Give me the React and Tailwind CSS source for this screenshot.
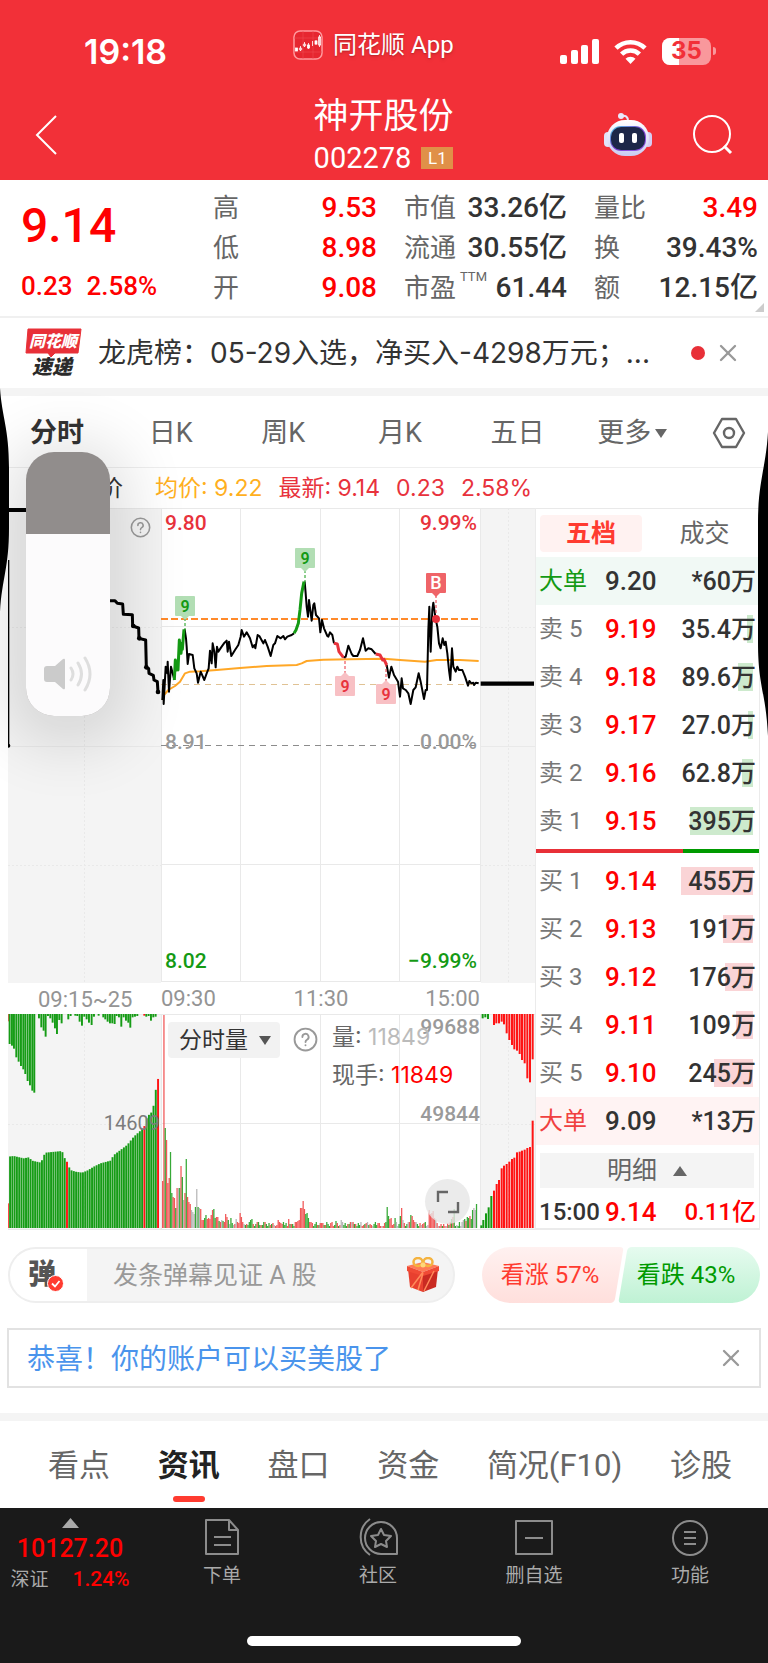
import React, { useState } from "react";
import { X } from "lucide-react";

const stats = [
  [
    { label: "高", value: "9.53", up: true },
    { label: "低", value: "8.98", up: true },
    { label: "开", value: "9.08", up: true },
  ],
  [
    { label: "市值", value: "33.26亿" },
    { label: "流通", value: "30.55亿" },
    { label: "市盈", sup: "TTM", value: "61.44" },
  ],
  [
    { label: "量比", value: "3.49", up: true },
    { label: "换", value: "39.43%" },
    { label: "额", value: "12.15亿" },
  ],
];

const asks = [
  { label: "卖 5", price: "9.19", volume: "35.4万", depth: 6 },
  { label: "卖 4", price: "9.18", volume: "89.6万", depth: 15 },
  { label: "卖 3", price: "9.17", volume: "27.0万", depth: 5 },
  { label: "卖 2", price: "9.16", volume: "62.8万", depth: 11 },
  { label: "卖 1", price: "9.15", volume: "395万", depth: 63 },
];

const bids = [
  { label: "买 1", price: "9.14", volume: "455万", depth: 72 },
  { label: "买 2", price: "9.13", volume: "191万", depth: 30 },
  { label: "买 3", price: "9.12", volume: "176万", depth: 28 },
  { label: "买 4", price: "9.11", volume: "109万", depth: 17 },
  { label: "买 5", price: "9.10", volume: "245万", depth: 39 },
];

// Price trace, in thirds of a pixel
const preOpen =
  "330,662 345,662 352,670 368,672 370,703 397,704 398,738 416,744 417,775 437,780 439,862 446,866 447,880 460,886 462,900 472,905 474,936";
const black1 = "487,960 490,900 491,972 497,860 502,880 503,845 507,935 513,860 518,880 523,900";
const green1 = "523,900 526,840 530,870 533,850 534,870 538,780 543,820 546,790 547,808 552,748";
const black2 =
  "554,748 558,775 560,800 563,852 567,822 578,825 583,865 590,880 594,908 602,875 613,900 620,880 626,865 630,812 635,850 638,790 643,815 647,862 651,800 655,815 665,800 672,790 680,782 683,815 687,785 694,828 705,810 715,795 722,770 725,750 732,770 740,757 750,775 758,802 763,795 766,805 773,765 778,768 790,790 795,780 803,800 812,828 820,795 825,790 832,768 842,775 850,768 855,778 862,770 875,765 882,760";
const green2 = "882,760 888,750 895,730 900,690 905,640 912,605";
const black3 =
  "914,605 917,640 920,680 924,710 927,660 935,722 940,675 943,670 948,705 957,715 961,757 966,720 972,745 982,768 985,770 990,757 997,765 1002,790";
const red1 = "1002,790 1012,792 1017,815 1030,832";
const black4 =
  "1030,832 1037,830 1045,797 1055,822 1060,828 1072,828 1080,810 1089,775 1097,812 1105,805 1115,808 1127,822";
const red2 = "1127,822 1140,825 1148,840 1152,838 1160,855";
const black5 =
  "1160,855 1167,893 1174,860 1182,885 1194,905 1200,950 1205,895 1209,925 1217,930 1225,940 1232,972 1240,930 1247,922 1256,880 1262,905 1272,957 1277,930 1281,930 1285,750 1288,680 1292,815 1297,690 1300,668 1307,718 1312,740 1317,790 1322,805 1328,775 1333,795 1337,785 1342,820 1347,870 1351,900 1356,805 1360,860 1367,875 1372,860 1377,870 1387,870 1395,890 1404,917 1408,903 1414,910 1420,908 1422,915 1428,908 1436,910";
const average =
  "487,960 492,945 505,930 525,918 540,905 555,880 570,875 600,874 650,870 720,864 800,858 890,855 905,850 920,843 970,839 1050,838 1152,836 1200,840 1275,845 1310,840 1380,840 1436,843";

const R = "#ee3b3b";
const G = "#149a14";
const S = "#aaaaaa";

const openingVolume = [
  [47, R], [213, R], [100, G], [88, R], [45, R], [50, R], [76, G], [35, G], [31, R], [30, R],
  [20, G], [40, R], [40, S], [40, G], [62, R], [51, G], [28, S], [35, R], [69, G], [31, R],
  [26, R], [24, R], [18, S], [16, S], [14, S], [21, G], [39, S], [21, G], [20, S], [19, R],
  [8, R], [8, R], [10, G], [13, G], [9, R], [10, R], [9, R], [13, R], [18, R], [19, G],
  [10, G], [11, R], [11, R], [7, G], [6, R], [8, S], [7, G], [6, R], [14, R], [11, R],
  [8, G], [4, S], [10, G], [5, G], [3, S], [4, R], [9, S], [6, R], [5, R], [15, R],
  [11, R], [6, R], [4, S], [3, G], [4, R], [3, G], [6, G], [8, G], [9, G], [4, R],
];
const volumeSpikes = {
  88: [8, R], 96: [9, R], 101: [6, R], 102: [6, R], 103: [7, R], 104: [8, R], 105: [20, R], 106: [20, R],
  107: [27, R], 108: [19, R], 109: [14, G], 110: [15, G], 111: [10, G], 112: [6, R], 132: [7, G],
  136: [8, S], 170: [6, G], 171: [21, G], 172: [12, G], 173: [9, R], 174: [10, R], 177: [10, G],
  181: [12, G], 182: [20, R], 183: [8, S], 189: [13, G], 190: [12, R], 191: [8, R], 203: [18, R],
  204: [14, R], 205: [15, R], 206: [17, R], 207: [10, R], 208: [9, S], 220: [9, G], 221: [11, R],
  222: [19, G], 229: [8, S], 230: [9, G], 231: [7, R], 232: [11, G], 233: [10, G], 234: [12, R],
  235: [9, G], 236: [18, G], 237: [20, S], 238: [18, S], 239: [24, G],
};
const tradeVolume = Array.from({ length: 240 }, (_, i) => {
  if (openingVolume[i]) return openingVolume[i];
  if (volumeSpikes[i]) return volumeSpikes[i];
  const n = (i * 37 + ((i * i) % 23) * 11) % 17;
  return [2 + (n % 5), n < 8 ? G : n < 14 ? R : S];
});

const preKeys = [
  [22, 470], [40, 468], [70, 475], [85, 472], [95, 482], [122, 488], [128, 470], [135, 458], [185, 453],
  [190, 472], [197, 478], [203, 495], [210, 510], [225, 515], [245, 518], [260, 512], [280, 500],
  [300, 490], [330, 482], [340, 465], [380, 435], [400, 410], [420, 392], [432, 378], [440, 350],
  [455, 335], [462, 305], [467, 260], [475, 228],
];
const levelAt = (x) => {
  const i = Math.max(1, preKeys.findIndex((k) => k[0] >= x));
  const [x0, y0] = preKeys[i - 1];
  const [x1, y1] = preKeys[i];
  return y0 + ((y1 - y0) * (x - x0)) / (x1 - x0);
};
const preBars = Array.from({ length: 67 }, (_, i) => {
  const x = 22 + i * 6.83;
  return { x, y: i === 0 ? 610 : levelAt(x), red: i === 0 || i === 26 || i === 60 || i === 66 };
});
const preTop = [
  [29, 132], [36, 137], [42, 146], [49, 172], [56, 185], [63, 198], [70, 208], [76, 222], [83, 243],
  [90, 256], [97, 272], [103, 278], [117, 55], [124, 82], [131, 92], [137, 110], [144, 48], [151, 55],
  [158, 68], [165, 85], [171, 102], [178, 60], [185, 70], [205, 58], [212, 48], [226, 47], [232, 48],
  [239, 65], [246, 77], [253, 50], [260, 58], [267, 68], [275, 75], [282, 50], [296, 47], [310, 52],
  [316, 58], [323, 65], [330, 70], [337, 70], [344, 72], [350, 48], [357, 52], [364, 80], [371, 52],
  [378, 62], [385, 68], [391, 83], [398, 52], [405, 50], [412, 48], [439, 50], [446, 48], [453, 62],
  [460, 52], [467, 50],
];
const closeTop = [
  [296, 55, G], [304, 52, G], [312, 57, G], [330, 75], [337, 70], [345, 70], [353, 65], [360, 73],
  [368, 100], [376, 120], [384, 135], [391, 148], [399, 152], [407, 162], [414, 180], [422, 190],
  [430, 235], [438, 247], [446, 178],
];
const closeBottom = [
  [292, 676, G], [298, 660, G], [306, 640, G], [314, 622, G], [322, 588, G], [330, 572], [338, 552],
  [345, 540], [353, 505], [360, 497], [368, 492], [376, 485], [384, 477], [391, 473], [399, 457],
  [407, 455], [414, 452], [422, 449], [430, 444], [438, 441], [446, 362],
];

const Marker = ({ x, y, text, color, bg, below, tip, solid }) => (
  <g>
    <line x1={x} x2={x} y1={below ? y - 2 : y + 22} y2={tip} stroke={color} strokeDasharray="3 2" />
    <path d={below ? `M${x - 4} ${y}l4 -4l4 4z` : `M${x - 4} ${y + 20}l4 4l4 -4z`} fill={bg} />
    <rect x={x - 10} y={y} width="20" height="20" rx="1" fill={bg} />
    <text
      x={x}
      y={y + 16}
      textAnchor="middle"
      fontSize={solid ? 18 : 16}
      fontWeight={solid ? 500 : 600}
      fill={solid ? "#fff" : color}
    >
      {text}
    </text>
  </g>
);

const MinuteChart = () => (
  <svg
    viewBox="8 508 527 722"
    className="block w-full h-auto font-[Roboto,'Noto_Sans_CJK_SC',sans-serif]"
    role="img"
    aria-label="分时走势"
  >
    {/* call auction and after-hours areas */}
    <g fill="#f4f4f4">
      <rect x="8" y="508" width="153" height="475" />
      <rect x="481" y="508" width="54" height="475" />
      <rect x="8" y="1014" width="153" height="216" />
      <rect x="481" y="1014" width="54" height="216" />
    </g>
    <g stroke="#e9e9e9" fill="none">
      <path d="M8 508.5H535M161.5 508V982M240.5 508V982M320.5 508V982M399.5 508V982M480.5 508V982M161 626.5H480M161 864.5H480M161 981.5H480" />
      <path d="M161.5 1014V1230M240.5 1014V1228M320.5 1014V1228M399.5 1014V1228M480.5 1014V1230M8 1014.5H535M161 1123.5H480M8 1229.5H535" />
      <path d="M8 627.5H161M8 865.5H161M84.5 508V982M481 627.5H535M481 865.5H535M508.5 508V982M84.5 1014V1228M8 1124.5H161M508.5 1014V1228M481 1124.5H535" strokeDasharray="2 2" />
      <path d="M8 746.5H161M481 746.5H535" />
    </g>
    <path d="M161 745.5H480" stroke="#8c8c8c" strokeDasharray="6 5" />
    <path d="M161 684.5H480" stroke="#e0c294" strokeDasharray="6 5" />
    <path d="M161 619H480" stroke="#ff8a2b" strokeWidth="2" strokeDasharray="7 3" />

    <g transform="translate(0 380) scale(0.33333)" fill="none" strokeWidth="6" strokeLinejoin="round">
      <polyline points={average} stroke="#ffa726" />
      <polyline points={preOpen} stroke="#000" strokeWidth="9" />
      <g stroke="#000">
        <polyline points={black1} />
        <polyline points={black2} />
        <polyline points={black3} />
        <polyline points={black4} />
        <polyline points={black5} />
        <path d="M24 390H90" strokeWidth="12" />
        <path d="M25 540V1097" />
        <path d="M1442 911H1602" strokeWidth="13" />
      </g>
      <g fill="#000">
        <circle cx="25" cy="1097" r="6" />
        <circle cx="474" cy="936" r="7" />
        <circle cx="439" cy="862" r="7" />
        <circle cx="400" cy="738" r="7" />
        <circle cx="418" cy="775" r="7" />
      </g>
      <g stroke={G} strokeWidth="9">
        <polyline points={green1} />
        <polyline points={green2} />
      </g>
      <g stroke="#e8323c" strokeWidth="9">
        <polyline points={red1} />
        <polyline points={red2} />
      </g>
    </g>
    <circle cx="436" cy="619" r="4" fill="#e8323c" />
    <Marker x={185} y={596} tip={630} text="9" color={G} bg="#b2deb4" />
    <Marker x={305} y={548} tip={582} text="9" color={G} bg="#b2deb4" />
    <Marker x={345} y={676} tip={658} text="9" color="#e8323c" bg="#f8c0c4" below />
    <Marker x={386} y={684} tip={664} text="9" color="#e8323c" bg="#f8c0c4" below />
    <Marker x={436} y={573} tip={616} text="B" color="#e8323c" bg="#ef6468" solid />

    <g fontSize="21" fontWeight="500">
      <text x="165" y="530" fill="#e8323c">9.80</text>
      <text x="477" y="530" textAnchor="end" fill="#e8323c">9.99%</text>
      <text x="165" y="749" fill="#999">8.91</text>
      <text x="477" y="749" textAnchor="end" fill="#999">0.00%</text>
      <text x="165" y="968" fill={G}>8.02</text>
      <text x="477" y="968" textAnchor="end" fill={G}>−9.99%</text>
    </g>
    <g fontSize="22" fill="#949494">
      <text x="38" y="1007">09:15~25</text>
      <text x="161" y="1006">09:30</text>
      <text x="321" y="1006" textAnchor="middle">11:30</text>
      <text x="480" y="1006" textAnchor="end">15:00</text>
    </g>

    {/* volume */}
    <g transform="translate(0 1000) scale(0.33333)">
      {preBars.map((b) => (
        <rect key={b.x} x={b.x - 1.5} y={b.y} width="5.8" height={684 - b.y} fill={b.red ? "#ff1414" : "#169c16"} />
      ))}
      <rect x="22" y="42" width="4" height="22" fill="#ff1414" />
      <rect x="430" y="42" width="6" height="5" fill="#ff1414" />
      {preTop.map(([x, y]) => (
        <rect key={x} x={x - 3} y="42" width="5.8" height={y - 42} fill="#169c16" />
      ))}
      {closeTop.map(([x, y, c]) => (
        <rect key={x} x={x + 1149} y="42" width="6" height={y - 42} fill={c || "#ff1414"} />
      ))}
      {closeBottom.map(([x, y, c]) => (
        <rect key={x} x={x + 1149} y={y} width="6" height={684 - y} fill={c || "#ff1414"} />
      ))}
      {tradeVolume.map(([h, color], i) => (
        <rect key={i} x={486 + i * 3.94} y={684 - h * 3} width="3.8" height={h * 3} fill={color} opacity="0.85" />
      ))}
    </g>
    <g fontSize="21" fontWeight="500" fill="#9a9a9a">
      <text x="480" y="1034" textAnchor="end">99688</text>
      <text x="480" y="1121" textAnchor="end">49844</text>
      <text x="160" y="1130" fontSize="20" fontWeight="400" textAnchor="end" fill="#7c7c7c">14609</text>
    </g>
  </svg>
);

const HelpIcon = ({ size }) => (
  <svg width={size} height={size} viewBox="0 0 24 24" fill="none" stroke="#999" strokeWidth="1.8" strokeLinecap="round">
    <circle cx="12" cy="12" r="10.5" />
    <path d="M9 9.6a3 3 0 1 1 4.4 2.6c-1 .6-1.4 1-1.4 2.2M12 17.4v.2" />
  </svg>
);

const BookRow = ({ row, color }) => (
  <tr className="h-12">
    <td className="pl-[3px] text-[24px] text-[#777]">{row.label}</td>
    <td className="text-[26px] font-medium text-[#ff0000]">{row.price}</td>
    <td className="relative pr-[3px] text-right text-[25px] font-medium text-[#333]">
      <div
        className={`absolute right-[6px] top-[10px] h-7 ${color}`}
        style={{ width: row.depth }}
      />
      <span className="relative">{row.volume}</span>
    </td>
  </tr>
);

const BigOrderRow = ({ price, volume, className, labelClass }) => (
  <tr className={`h-12 ${className}`}>
    <td className={`pl-[3px] text-[24px] ${labelClass}`}>大单</td>
    <td className="text-[26px] font-medium text-[#333]">{price}</td>
    <td className="pr-[3px] text-right text-[25px] font-medium text-[#333]">{volume}</td>
  </tr>
);

const OrderBook = () => (
  <div className="w-[225px] shrink-0 border-x border-b-2 border-[#ebebeb] leading-none">
    <div className="flex h-[49px] items-center border-t border-[#e9e9e9] pl-1 text-[25px]">
      <button className="h-[37px] w-[102px] rounded bg-[#fff2f1] font-bold text-[#ff3b30]">五档</button>
      <button className="flex-1 pl-2 text-[#666]">成交</button>
    </div>
    <table className="w-full table-fixed border-collapse whitespace-nowrap">
      <colgroup>
        <col className="w-[69px]" />
        <col className="w-[58px]" />
        <col />
      </colgroup>
      <tbody>
        <BigOrderRow price="9.20" volume="*60万" className="bg-[#f1f9f5]" labelClass="text-[#149a14]" />
        {asks.map((row) => (
          <BookRow key={row.label} row={row} color="bg-[#cdeacd]" />
        ))}
        <tr className="h-3">
          <td colSpan={3}>
            <div className="flex h-1">
              <div className="w-[66%] bg-[#e83038]" />
              <div className="flex-1 bg-[#009a00]" />
            </div>
          </td>
        </tr>
        {bids.map((row) => (
          <BookRow key={row.label} row={row} color="bg-[#fad4d6]" />
        ))}
        <BigOrderRow price="9.09" volume="*13万" className="bg-[#fff3f3]" labelClass="text-[#f04040]" />
      </tbody>
    </table>
    <button className="mx-1 mt-2 flex h-[35px] w-[214px] items-center justify-center gap-4 bg-[#f4f4f4] text-[25px] text-[#666]">
      明细
      <svg width="14" height="10" viewBox="0 0 14 10">
        <path d="M7 0l7 10H0z" fill="#666" />
      </svg>
    </button>
    <div className="flex h-10 items-center whitespace-nowrap pl-[3px] pr-[3px] pt-2 text-[24px] font-medium">
      <span className="w-[66px] text-[#333]">15:00</span>
      <span className="text-[26px] text-[#ff0000]">9.14</span>
      <span className="ml-auto text-[#ff0000]">0.11亿</span>
    </div>
  </div>
);

const StatusBar = () => (
  <div className="flex h-[90px] items-center pl-[84px] pr-[52px] pt-3">
    <span className="font-[Inter,sans-serif] text-[34px] font-semibold">19:18</span>
    <div className="ml-[126px] flex items-center gap-[10px] pb-3">
      <svg width="30" height="30" viewBox="0 0 30 30" fill="none">
        <rect x="1" y="1" width="28" height="28" rx="6" fill="#e62630" stroke="#ff9a9e" strokeWidth="1.5" />
        <path d="M1 8h28M1 22h28M10 1v28M20 1v28" stroke="#f04a52" strokeWidth="0.6" />
        <g stroke="#fff" strokeWidth="0.8">
          <rect x="2.5" y="18" width="2" height="3" fill="#fff" />
          <path d="M7.5 16v5M11.5 12v5M15.5 13v6M19.5 11v5M23 10v5M26.5 5v12" />
          <circle cx="7.5" cy="19" r="1.3" />
          <circle cx="11.5" cy="15" r="1.3" />
          <rect x="14.5" y="15" width="2" height="3" fill="#fff" />
          <rect x="22" y="11" width="2" height="3" fill="#fff" />
          <rect x="25.6" y="7" width="2" height="8" />
        </g>
      </svg>
      <span className="text-[24px] leading-none text-shadow-md">同花顺 App</span>
    </div>
    <div className="ml-auto flex items-center gap-[15px]">
      <svg width="39" height="25" viewBox="0 0 39 25" fill="#fff">
        <rect x="0" y="16" width="7" height="9" rx="2" />
        <rect x="11" y="11" width="7" height="14" rx="2" />
        <rect x="21" y="6" width="7" height="19" rx="2" />
        <rect x="32" y="0" width="7" height="25" rx="2" />
      </svg>
      <svg width="33" height="25" viewBox="0 0 33 25" fill="none" stroke="#fff" strokeWidth="4.6">
        <path d="M2 9.2a20.5 20.5 0 0 1 29 0" />
        <path d="M7.6 15.2a12.6 12.6 0 0 1 17.8 0" />
        <path d="M16.5 25l-5-5.2a7 7 0 0 1 10 0z" fill="#fff" stroke="none" />
      </svg>
      <div className="flex items-center gap-[2px]">
        <div className="relative flex h-[27px] w-[49px] items-center justify-center overflow-hidden rounded-lg bg-[#f9989c]">
          <div className="absolute inset-y-0 left-0 w-[17px] bg-white" />
          <span className="relative font-[Inter,sans-serif] text-[24px] font-bold leading-none text-[#f23038]">35</span>
        </div>
        <div className="h-2 w-[3px] rounded-r bg-[#f9989c]" />
      </div>
    </div>
  </div>
);

const Robot = () => (
  <svg width="50" height="46" viewBox="0 0 50 46">
    <defs>
      <linearGradient id="shell" x1="0" y1="0" x2="0" y2="1">
        <stop offset="0" stopColor="#ffffff" />
        <stop offset="1" stopColor="#c9cbf2" />
      </linearGradient>
      <linearGradient id="rim" x1="0" y1="0" x2="1" y2="1">
        <stop offset="0" stopColor="#4fd3e6" />
        <stop offset="0.5" stopColor="#7a3fd0" />
        <stop offset="1" stopColor="#9a5ce8" />
      </linearGradient>
    </defs>
    <path d="M18 4c5-1 7 1 7 5" fill="none" stroke="#e6e6fa" strokeWidth="2" />
    <circle cx="18" cy="4" r="3" fill="#e9e9fb" />
    <rect x="1" y="20" width="8" height="15" rx="4" fill="#e2e2f8" />
    <rect x="41" y="20" width="8" height="15" rx="4" fill="#d6ccf4" />
    <rect x="4" y="8" width="42" height="36" rx="18" fill="url(#shell)" />
    <rect x="7" y="14" width="36" height="25" rx="11" fill="url(#rim)" />
    <rect x="8" y="15" width="34" height="23" rx="10" fill="#1d2748" />
    <rect x="16" y="21" width="5" height="10" rx="2" fill="#fff" />
    <rect x="29" y="21" width="5" height="10" rx="2" fill="#fff" />
  </svg>
);

const Header = () => (
  <header className="bg-[#f23038] text-white">
    <StatusBar />
    <div className="grid h-[90px] grid-cols-[1fr_auto_1fr] items-center pl-[34px] pr-[35px]">
      <button aria-label="返回" className="w-fit">
        <svg width="24" height="40" viewBox="0 0 24 40" fill="none" stroke="#fff" strokeWidth="2">
          <path d="M22 1L3 20l19 19" />
        </svg>
      </button>
      <div className="flex flex-col items-center gap-[5px] pb-[2px]">
        <h1 className="text-[35px] leading-[42px]">神开股份</h1>
        <div className="flex items-center gap-[10px] leading-[30px]">
          <span className="text-[29px]">002278</span>
          <span className="flex h-[22px] w-8 items-center justify-center bg-[#e09048] text-[17px]">L1</span>
        </div>
      </div>
      <div className="flex items-center justify-end gap-10">
        <button aria-label="智能助手">
          <Robot />
        </button>
        <button aria-label="搜索">
          <svg width="40" height="40" viewBox="0 0 40 40" fill="none" stroke="#fff" strokeWidth="2">
            <circle cx="19" cy="19" r="18" />
            <path d="M31 31l7 7" strokeWidth="3" />
          </svg>
        </button>
      </div>
    </div>
  </header>
);

const Quote = () => (
  <section className="relative grid h-[138px] grid-cols-[165fr_164fr_163fr_164fr] gap-x-[27px] border-b-2 border-[#f0f0f0] pl-[21px] pr-[10px] pt-2 leading-none">
    <div className="whitespace-nowrap text-[#ff0000]">
      <div className="mt-[14px] text-[48px] font-medium">9.14</div>
      <div className="mt-[23px] flex gap-[14px] text-[26px] font-medium">
        <span>0.23</span>
        <span>2.58%</span>
      </div>
    </div>
    {stats.map((column) => (
      <dl key={column[0].label}>
        {column.map((item) => (
          <div key={item.label} className="flex h-10 items-center justify-between whitespace-nowrap">
            <dt className="text-[26px] text-[#666]">
              {item.label}
              {item.sup && <sup className="-top-4 ml-1 text-[13px]">{item.sup}</sup>}
            </dt>
            <dd className={`text-[28px] font-medium ${item.up ? "text-[#ff0000]" : "text-[#333]"}`}>{item.value}</dd>
          </div>
        ))}
      </dl>
    ))}
    <svg className="absolute bottom-1 right-1" width="9" height="9" viewBox="0 0 9 9">
      <path d="M9 0v9H0z" fill="#ccc" />
    </svg>
  </section>
);

const NewsBar = () => (
  <div className="flex h-[70px] items-center pl-6 pr-[26px]">
    <svg width="60" height="52" viewBox="0 0 60 52" className="shrink-0">
      <path d="M4 2h53l-3 24H31l-4 4l-3-4H2z" fill="#e83038" stroke="#e83038" strokeLinejoin="round" />
      <g fontStyle="italic" fontWeight="900" textAnchor="middle">
        <text x="29" y="20" fontSize="16" fill="#fff">同花顺</text>
        <text x="28" y="47" fontSize="20" fill="#2a2a2a">速递</text>
      </g>
    </svg>
    <p className="ml-[14px] min-w-0 flex-1 truncate font-[Inter,'Noto_Sans_CJK_SC',sans-serif] text-[28px] text-[#333]">
      龙虎榜：05-29入选，净买入-4298万元；...
    </p>
    <span className="ml-4 size-[14px] shrink-0 rounded-full bg-[#e83038]" />
    <button aria-label="关闭" className="ml-[9px] text-[#999]">
      <X size={28} strokeWidth={2} />
    </button>
  </div>
);

const ChartTabs = () => (
  <nav className="flex h-[72px] items-center justify-between border-b border-[#eee] pl-[30px] pr-[22px] pt-[3px] text-[27px] text-[#666]">
    <button className="font-bold text-[#333]">分时</button>
    <button className="pl-5">日K</button>
    <button className="pl-6">周K</button>
    <button className="pl-7">月K</button>
    <button className="pl-6">五日</button>
    <button className="flex items-center gap-1 pl-2">
      更多
      <svg width="12" height="9" viewBox="0 0 12 9">
        <path d="M0 0h12L6 9z" fill="#666" />
      </svg>
    </button>
    <button aria-label="设置">
      <svg width="34" height="32" viewBox="0 0 34 32" fill="none" stroke="#666" strokeWidth="2.4">
        <path d="M10 2h14l8 14l-8 14H10L2 16z" strokeLinejoin="round" />
        <circle cx="17" cy="16" r="5" />
      </svg>
    </button>
  </nav>
);

const ChartPanel = () => (
  <section className="px-2">
    <div className="flex h-10 items-center gap-4 whitespace-nowrap pl-[69px] font-[Inter,'Noto_Sans_CJK_SC',sans-serif] text-[23px] text-[#e8323c]">
      <span className="mr-4 text-[#333]">股价</span>
      <span className="text-[#ffb01f]">均价: 9.22</span>
      <span>最新: 9.14</span>
      <span>0.23</span>
      <span>2.58%</span>
    </div>
    <div className="flex">
      <div className="relative min-w-0 flex-1">
        <MinuteChart />
        <button aria-label="集合竞价说明" className="absolute left-[122px] top-[9px]">
          <HelpIcon size={21} />
        </button>
        <div className="absolute left-[160px] top-[514px] flex items-start">
          <div className="relative flex items-center">
            <select
              aria-label="指标"
              className="h-9 w-[112px] appearance-none rounded bg-[#f2f2f2] pl-[11px] text-[23px] leading-none text-[#333]"
            >
              <option>分时量</option>
            </select>
            <svg className="pointer-events-none absolute right-[9px]" width="12" height="9" viewBox="0 0 12 9">
              <path d="M0 0h12L6 9z" fill="#555" />
            </svg>
          </div>
          <button aria-label="分时量说明" className="ml-[13px] mt-[5px]">
            <HelpIcon size={25} />
          </button>
          <div className="ml-[14px] font-[Inter,'Noto_Sans_CJK_SC',sans-serif] text-[23px] leading-[38px] text-[#666]">
            <div className="-mt-1">
              量: <span className="text-[#bbb]">11849</span>
            </div>
            <div>
              现手: <span className="text-[#ff0000]">11849</span>
            </div>
          </div>
        </div>
        <button
          aria-label="全屏"
          className="absolute bottom-[6px] right-[65px] flex size-[45px] items-center justify-center rounded-full bg-[#e6e6e6]/80"
        >
          <svg width="24" height="24" viewBox="0 0 24 24" fill="none" stroke="#666" strokeWidth="2.4">
            <path d="M2 12V2h10M22 12v10H12" />
          </svg>
        </button>
      </div>
      <OrderBook />
    </div>
  </section>
);

const Gift = () => (
  <svg width="34" height="36" viewBox="0 0 34 36">
    <path d="M2 12l15 4v19L4 30z" fill="#e8402f" />
    <path d="M32 12l-15 4v19l13-5z" fill="#c92a22" />
    <path d="M1 9l16-4 16 4-16 6z" fill="#ff7a55" />
    <path d="M1 9l16 6v4L1 14zM33 9l-16 6v4l16-5z" fill="#f04a35" />
    <path d="M5 31l12-16M12 33l5-17M28 14L18 34" stroke="#ff8a5a" strokeWidth="1.5" />
    <ellipse cx="12" cy="5" rx="4.5" ry="4" fill="none" stroke="#f4b340" strokeWidth="2.5" />
    <ellipse cx="22" cy="5" rx="4.5" ry="4" fill="none" stroke="#f4b340" strokeWidth="2.5" />
    <circle cx="17" cy="8" r="2.5" fill="#ffd77a" />
  </svg>
);

const DanmuBar = () => (
  <section className="grid grid-cols-[447fr_278fr] gap-x-[27px] px-2 pt-[17px]">
    <div className="flex h-14 items-center overflow-hidden rounded-full border-2 border-[#eee] bg-[#f4f4f4] pr-[13px]">
      <button aria-label="弹幕开关" className="relative h-full w-[77px] shrink-0 bg-white pl-[18px] text-left text-[28px] font-black leading-none text-[#555]">
        弹
        <svg className="absolute bottom-[9px] left-[37px]" width="17" height="17" viewBox="0 0 17 17">
          <circle cx="8.5" cy="8.5" r="8" fill="#ff3b30" stroke="#fff" />
          <path d="M5 8.5l3 3 4.5-5.5" fill="none" stroke="#fff" strokeWidth="1.8" />
        </svg>
      </button>
      <input
        type="text"
        aria-label="发弹幕"
        placeholder="发条弹幕见证 A 股"
        className="ml-[26px] mt-[2px] min-w-0 flex-1 bg-transparent text-[25px] placeholder:text-[#999]"
      />
      <button aria-label="送礼物">
        <Gift />
      </button>
    </div>
    <div className="relative flex h-14 text-[24px]">
      <svg className="absolute inset-0 size-full" viewBox="0 0 278 56" preserveAspectRatio="none">
        <defs>
          <linearGradient id="rise" x1="0" y1="0" x2="0" y2="1">
            <stop offset="0" stopColor="#fff1f0" />
            <stop offset="1" stopColor="#ffdfdc" />
          </linearGradient>
          <linearGradient id="fall" x1="0" y1="0" x2="0" y2="1">
            <stop offset="0" stopColor="#e6fbef" />
            <stop offset="1" stopColor="#bff2d4" />
          </linearGradient>
        </defs>
        <path d="M28 0h110q4 0 3 4l-8 48q-1 4-5 4H28a28 28 0 0 1 0-56z" fill="url(#rise)" />
        <path d="M250 0H150q-4 0-5 4l-8 48q-1 4 3 4h110a28 28 0 0 0 0-56z" fill="url(#fall)" />
      </svg>
      <button className="relative flex-1 text-[#ff3b30]">看涨 57%</button>
      <button className="relative flex-1 pr-[6px] text-[#009a00]">看跌 43%</button>
    </div>
  </section>
);

const Promo = () => (
  <div className="mx-[7px] mt-[25px] flex h-[60px] items-center justify-between border-2 border-[#e2e2e2] pl-[18px] pr-[14px]">
    <a href="#us-stocks" className="pt-[3px] text-[28px] text-[#4a94ec]">
      恭喜！你的账户可以买美股了
    </a>
    <button aria-label="关闭" className="text-[#999]">
      <X size={28} strokeWidth={2} />
    </button>
  </div>
);

const infoTabs = ["看点", "资讯", "盘口", "资金", "简况(F10)", "诊股"];

const InfoTabs = ({ active, onChange }) => (
  <nav className="flex h-[87px] items-stretch justify-between pl-12 pr-9 text-[31px] text-[#666]">
    {infoTabs.map((tab) => (
      <button
        key={tab}
        onClick={() => onChange(tab)}
        className={`relative pt-[3px] ${tab === active ? "font-bold text-[#222]" : ""}`}
      >
        {tab}
        {tab === active && (
          <span className="absolute bottom-[6px] left-1/2 h-[6px] w-8 -translate-x-1/2 rounded-full bg-[#ff3b30]" />
        )}
      </button>
    ))}
  </nav>
);

const actions = [
  {
    label: "下单",
    icon: <path d="M3 2h23l9 10v24H3zM26 2v10h9M11 19h17M11 27h17" />,
  },
  {
    label: "社区",
    icon: (
      <>
        <path d="M22 4a16 16 0 0 1 16 16v16H22a16 16 0 0 1 0-32z" />
        <path d="M11 1a22 22 0 0 0 0 36" />
        <path d="M22 11l3 6 7 1-5 5 1 6-6-3-6 3 1-6-5-5 7-1z" />
      </>
    ),
  },
  { label: "删自选", icon: <path d="M1 3h36v33H1zM10 20h18" /> },
  {
    label: "功能",
    icon: (
      <>
        <circle cx="19" cy="20" r="17" />
        <path d="M13 14h12M13 20h12M13 26h12" />
      </>
    ),
  },
];

const BottomBar = () => (
  <footer className="flex h-[155px] flex-col justify-between bg-[#1a1a1a] pb-[17px] text-[#aaa]">
    <div className="flex leading-none">
      <button className="mr-1 flex w-[140px] flex-col items-center pt-[10px]">
        <svg width="17" height="10" viewBox="0 0 17 10">
          <path d="M8.5 0L17 10H0z" fill="#aaa" />
        </svg>
        <span className="mt-2 text-[25px] font-medium text-[#ff0000]">10127.20</span>
        <span className="mt-2 flex items-center gap-6 text-[19px]">
          深证 <span className="text-[21px] font-medium text-[#ff0000]">1.24%</span>
        </span>
      </button>
      <div className="grid flex-1 grid-cols-4 pt-[10px]">
        {actions.map((action) => (
          <button key={action.label} className="flex flex-col items-center gap-[10px]">
            <svg width="39" height="38" viewBox="0 0 39 38" fill="none" stroke="#8c8c8c" strokeWidth="2" strokeLinejoin="round">
              {action.icon}
            </svg>
            <span className="text-[19px]">{action.label}</span>
          </button>
        ))}
      </div>
    </div>
    <div className="h-[10px] w-[274px] self-center rounded-full bg-white" />
  </footer>
);

const VolumeOverlay = () => {
  const [level, setLevel] = useState(69);

  return (
    <div className="absolute left-[26px] top-[452px] h-[264px] w-[84px] rounded-[28px] shadow-[0_10px_60px_20px_rgba(0,0,0,0.12)]">
      <div className="relative flex size-full flex-col justify-end overflow-hidden rounded-[28px] bg-[#918d8c]">
        <div className="flex items-end justify-center bg-[#fcfbfc] pb-6" style={{ height: `${level}%` }}>
          <svg width="50" height="36" viewBox="0 0 50 36" fill="none" stroke="#dedede" strokeWidth="3" strokeLinecap="round">
            <path d="M4 10h8l8-7q2-1 2 1v28q0 2-2 1l-8-7H4q-3 0-3-3V13q0-3 3-3z" fill="#cbcbcb" stroke="none" />
            <path d="M28 12q4 6 0 12M35 7q7 11 0 22M42 2q10 16 0 32" />
          </svg>
        </div>
        <input
          type="range"
          aria-label="音量"
          value={level}
          onChange={(e) => setLevel(Number(e.target.value))}
          className="absolute inset-0 size-full cursor-pointer opacity-0"
        />
      </div>
    </div>
  );
};

const App = () => {
  const [tab, setTab] = useState("资讯");

  return (
    <div className="relative overflow-hidden bg-white font-[Roboto,'Noto_Sans_CJK_SC',sans-serif] text-[#333]">
      <Header />
      <Quote />
      <NewsBar />
      <div className="h-2 bg-[#f4f4f4]" />
      <ChartTabs />
      <ChartPanel />
      <DanmuBar />
      <Promo />
      <div className="mt-[25px] h-2 bg-[#f4f4f4]" />
      <InfoTabs active={tab} onChange={setTab} />
      <BottomBar />

      {/* volume button press effect on both screen edges */}
      <VolumeOverlay />
      <svg className="pointer-events-none absolute left-0 top-[388px]" width="10" height="224" viewBox="0 0 10 224">
        <path d="M0 0C2 30 9 40 9 80V140C9 180 2 190 0 224z" />
      </svg>
      <svg className="pointer-events-none absolute right-0 top-[432px]" width="12" height="304" viewBox="0 0 12 304">
        <path d="M12 0C10 35 2 50 2 90V210C2 255 10 260 12 304z" />
      </svg>
    </div>
  );
};

export default App;
